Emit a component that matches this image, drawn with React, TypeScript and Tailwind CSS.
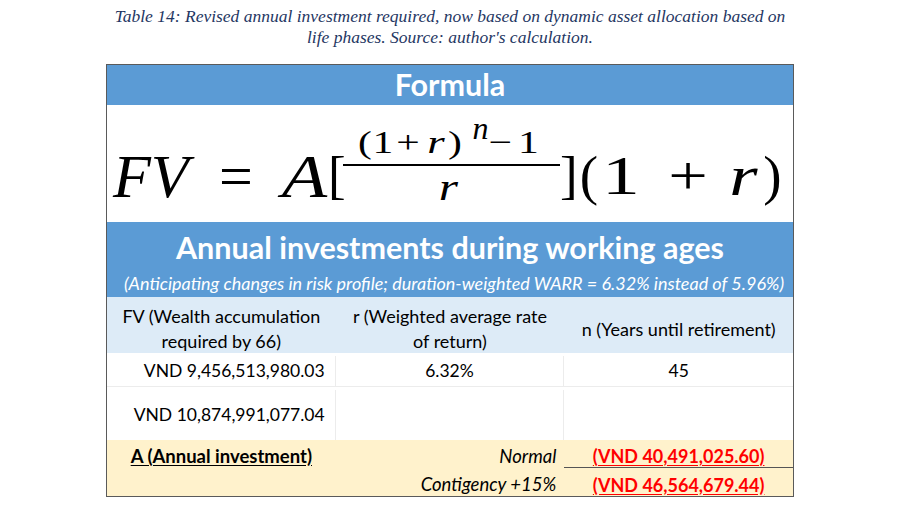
const body = { fontFamily: 'Lato, "Open Sans", sans-serif' }

function Formula() {
  return (
    <div
      className="flex h-[117px] items-center bg-white pl-[6px] pt-[24px] text-black"
      style={{ fontFamily: '"Liberation Serif", "DejaVu Serif", serif' }}
    >
      <span className="w-[80px] text-[62px] italic leading-none">FV</span>
      <span className="ml-[25px] w-[36px] text-center text-[60px] leading-none">=</span>
      <span className="ml-[27px] w-[47px] scale-x-[1.2] text-center text-[62px] italic leading-none">A</span>
      <span className="w-[17px] text-center text-[53px] leading-none">[</span>

      {/* fraction */}
      <span className="-ml-[2px] mb-[20px] inline-flex w-[217px] flex-col">
        <span className="flex h-[32px] items-start pl-[15px] text-[32px] leading-none">
          <span className="w-[14px] scale-x-[1.3] text-center">(</span>
          <span className="ml-[2px] w-[18px] scale-x-[1.3] text-center">1</span>
          <span className="ml-[3px] w-[26px] scale-x-[1.3] text-center">+</span>
          <span className="ml-[3px] w-[24px] scale-x-[1.4] text-center italic">r</span>
          <span className="w-[14px] scale-x-[1.3] text-center">)</span>
          <span className="-mt-[14px] ml-[10px] w-[17px] text-center italic">n</span>
          <span className="-ml-[2px] w-[26px] scale-x-[1.3] text-center">−</span>
          <span className="ml-[2px] w-[27px] scale-x-[1.3] text-center">1</span>
        </span>
        <span className="mt-[6px] h-[2px] w-full bg-black" />
        <span className="mr-[6px] mt-[2px] self-center scale-x-[1.3] text-[38px] italic leading-none">r</span>
      </span>

      <span className="w-[15px] text-center text-[53px] leading-none">]</span>
      <span className="ml-[2px] w-[24px] text-center text-[55px] leading-none">(</span>
      <span className="w-[40px] scale-x-[1.4] text-center text-[54px] leading-none">1</span>
      <span className="ml-[27px] w-[40px] scale-x-[1.3] text-center text-[54px] leading-none">+</span>
      <span className="ml-[22px] w-[27px] scale-x-[1.3] text-center text-[56px] italic leading-none">r</span>
      <span className="ml-[2px] w-[27px] text-center text-[55px] leading-none">)</span>
    </div>
  )
}

export default function App() {
  return (
    <div className="h-[518px] w-[900px] bg-white pt-[6px]">
      <p
        className="text-center text-[17.5px] italic leading-[21px] text-[#1f3763]"
        style={{ fontFamily: '"Liberation Serif", serif' }}
      >
        Table 14: Revised annual investment required, now based on dynamic asset allocation based on
        <br />
        life phases. Source: author&apos;s calculation.
      </p>

      <div className="mx-auto mt-[16px] w-[688px] border border-[#5a5a5a]" style={body}>
        <div className="flex h-[40px] items-center justify-center bg-[#5b9bd5] text-[30.5px] font-bold text-white">
          Formula
        </div>

        <Formula />

        <div className="flex h-[75px] flex-col items-center bg-[#5b9bd5] text-white">
          <div className="mt-[5px] text-[30.5px] font-bold leading-[40px]">
            Annual investments during working ages
          </div>
          <div className="mt-[4px] whitespace-nowrap pl-[8px] text-[18px] italic leading-[24px]">
            (Anticipating changes in risk profile; duration-weighted WARR = 6.32% instead of 5.96%)
          </div>
        </div>

        <div className="grid h-[56px] grid-cols-3 bg-[#ddebf7] pt-[7px] text-[18px] leading-[25px] text-black">
          <div className="flex items-center justify-center text-center">
            FV (Wealth accumulation
            <br />
            required by 66)
          </div>
          <div className="flex items-center justify-center text-center">
            r (Weighted average rate
            <br />
            of return)
          </div>
          <div className="flex items-center justify-center whitespace-nowrap text-center">
            n (Years until retirement)
          </div>
        </div>

        <div className="grid h-[34px] grid-cols-3 border-b border-[#ececec] bg-white pt-[3px] text-[17.5px] text-black">
          <div className="flex items-center justify-end border-r border-[#ececec] pr-[10px]">
            VND 9,456,513,980.03
          </div>
          <div className="flex items-center justify-center border-r border-[#ececec]">6.32%</div>
          <div className="flex items-center justify-center">45</div>
        </div>

        <div className="grid h-[53px] grid-cols-3 bg-white pt-[3px] text-[17.5px] text-black">
          <div className="flex items-center justify-end border-r border-[#ececec] pr-[10px]">
            VND 10,874,991,077.04
          </div>
          <div className="border-r border-[#ececec]" />
          <div />
        </div>

        <div className="grid grid-cols-3 bg-[#fff2cc] text-black">
          <div className="flex h-[28px] items-center justify-center pt-[6px] text-[18.5px] font-bold underline underline-offset-2">
            A (Annual investment)
          </div>
          <div className="flex h-[28px] items-center justify-end pr-[8px] pt-[6px] text-[18.5px] italic">Normal</div>
          <div className="flex h-[28px] items-center justify-center border-b border-[#555] pt-[6px] text-[18px] font-bold text-[#ff0000] underline underline-offset-2">
            (VND 40,491,025.60)
          </div>
          <div className="h-[28px]" />
          <div className="flex h-[28px] items-center justify-end pr-[8px] pt-[6px] text-[18.5px] italic">
            Contigency +15%
          </div>
          <div className="flex h-[28px] items-center justify-center pt-[6px] text-[18px] font-bold text-[#ff0000] underline underline-offset-2">
            (VND 46,564,679.44)
          </div>
        </div>
      </div>
    </div>
  )
}
